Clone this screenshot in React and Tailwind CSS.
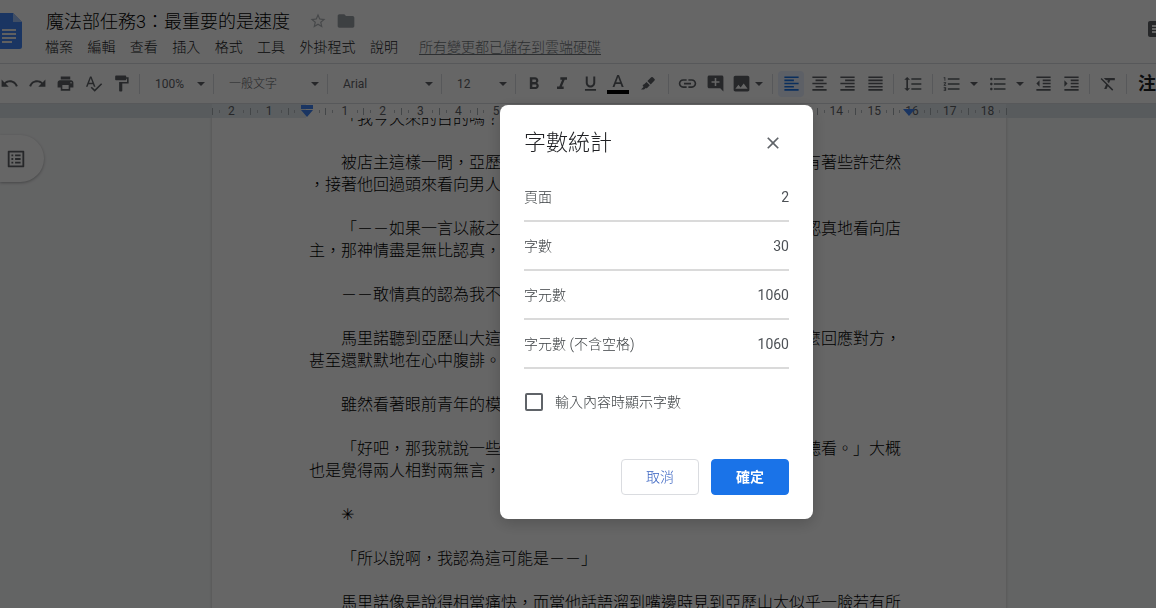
import React, { useState } from 'react';
import {
  MdAddComment,
  MdClose,
  MdComment,
  MdFolder,
  MdFormatAlignCenter,
  MdFormatAlignJustify,
  MdFormatAlignLeft,
  MdFormatAlignRight,
  MdFormatBold,
  MdFormatClear,
  MdFormatIndentDecrease,
  MdFormatIndentIncrease,
  MdFormatItalic,
  MdFormatLineSpacing,
  MdFormatListBulleted,
  MdFormatListNumbered,
  MdFormatPaint,
  MdFormatUnderlined,
  MdImage,
  MdLink,
  MdListAlt,
  MdPrint,
  MdRedo,
  MdSpellcheck,
  MdStarBorder,
  MdUndo,
} from 'react-icons/md';

const menus = ['檔案', '編輯', '查看', '插入', '格式', '工具', '外掛程式', '說明'];

// one array per paragraph, one string per line
const paragraphs = [
  ['　　「我今天來的目的嗎？」'],
  [
    '　　被店主這樣一問，亞歷山大先是愣了一下，那雙湛藍的眼眸之中帶有著些許茫然',
    '，接著他回過頭來看向男人。',
  ],
  [
    '　　「－－如果一言以蔽之，就是想請您幫個忙。」亞歷山大說著，很認真地看向店',
    '主，那神情盡是無比認真，不像玩笑。',
  ],
  ['　　－－敢情真的認為我不會拒絕嗎？'],
  [
    '　　馬里諾聽到亞歷山大這麼一說，頓時之間竟然有些不知道究竟該怎麼回應對方，',
    '甚至還默默地在心中腹誹。',
  ],
  ['　　雖然看著眼前青年的模樣並不討厭。'],
  [
    '　　「好吧，那我就說一些關於這件事情的來龍去脈，您不妨先姑且聽聽看。」大概',
    '也是覺得兩人相對兩無言，他開口。',
  ],
  ['　　✳\uFE0E'],
  ['　　「所以說啊，我認為這可能是－－」'],
  ['　　馬里諾像是說得相當痛快，而當他話語溜到嘴邊時見到亞歷山大似乎一臉若有所'],
];

const stats = [
  { label: '頁面', value: 2 },
  { label: '字數', value: 30 },
  { label: '字元數', value: 1060 },
  { label: '字元數 (不含空格)', value: 1060 },
];

const Caret = () => (
  <svg viewBox="0 0 8 4" className="w-2 h-1 shrink-0" fill="currentColor" aria-hidden="true">
    <path d="M0 0h8L4 4z" />
  </svg>
);

const Divider = () => <div className="w-px h-5 mx-1 bg-[#dadce0] shrink-0" />;

const ToolButton = ({ label, active, children }) => (
  <button
    type="button"
    aria-label={label}
    className="flex items-center justify-center w-7 h-7 shrink-0"
  >
    <span
      className={
        active
          ? 'flex items-center justify-center size-[26px] rounded-sm bg-[#e8f0fe] text-[#1a73e8]'
          : 'flex items-center justify-center size-[26px]'
      }
    >
      {children}
    </span>
  </button>
);

const ToolSelect = ({ label, value, className }) => (
  <div className={`grid items-center shrink-0 ${className}`}>
    <select
      aria-label={label}
      defaultValue={value}
      className="w-full h-7 pl-[11px] pr-4 appearance-none bg-transparent [grid-area:1/1]"
    >
      <option>{value}</option>
    </select>
    <div className="mr-1 pointer-events-none justify-self-end [grid-area:1/1]">
      <Caret />
    </div>
  </div>
);

const DocsLogo = () => (
  <svg viewBox="4 0 22 36" className="w-[22px] h-9 mt-[5px] shrink-0" aria-hidden="true">
    <path d="M2.500 0H17l9 9v24.500a2.500 2.500 0 0 1-2.500 2.500h-21A2.500 2.500 0 0 1 0 33.500v-31A2.500 2.500 0 0 1 2.500 0z" fill="#4285f4" />
    <path d="M17 0l9 9h-9z" fill="#a1c2fa" />
    <path d="M6 16h14v2H6zm0 4h14v2H6zm0 4h14v2H6zm0 4h10v2H6z" fill="#f1f1f1" />
  </svg>
);

const Header = () => (
  <header className="flex pt-2 pb-[3px] border-b border-[#dadce0] bg-white">
    <DocsLogo />
    <div className="flex-1 min-w-0 ml-[23px]">
      <div className="flex items-center h-[26px]">
        <input
          aria-label="文件名稱"
          defaultValue="魔法部任務3：最重要的是速度"
          className="w-[256px] h-[26px] px-px text-[18px] text-black bg-transparent"
        />
        <button type="button" aria-label="加上星號" className="ml-2 text-[#b0b4b8]">
          <MdStarBorder size={18} />
        </button>
        <button type="button" aria-label="移動" className="ml-[9px] text-[#9aa0a6]">
          <MdFolder size={20} />
        </button>
      </div>
      <div className="flex items-center h-[26px] text-sm text-[#202124] whitespace-nowrap">
        <nav className="flex justify-between w-[353px]">
          {menus.map((menu) => (
            <button key={menu} type="button">{menu}</button>
          ))}
        </nav>
        <a href="#history" className="ml-[21px] text-[#70757a] underline underline-offset-2">
          所有變更都已儲存到雲端硬碟
        </a>
      </div>
    </div>
    <button type="button" aria-label="註解" className="flex w-2 h-6 mt-[11px] overflow-hidden text-[#5f6368]">
      <MdComment size={24} className="-ml-0.5 shrink-0" />
    </button>
  </header>
);

const Toolbar = () => (
  <div className="flex items-center h-10 overflow-hidden border-b border-[#dadce0] bg-white text-[#5f6368]">
    <div className="flex -ml-[5px] shrink-0">
      <ToolButton label="復原"><MdUndo size={19} /></ToolButton>
      <ToolButton label="取消復原"><MdRedo size={19} /></ToolButton>
      <ToolButton label="列印"><MdPrint size={19} /></ToolButton>
      <ToolButton label="拼字檢查"><MdSpellcheck size={19} /></ToolButton>
      <ToolButton label="複製格式"><MdFormatPaint size={19} /></ToolButton>
    </div>
    <Divider />
    <ToolSelect label="縮放" value="100%" className="w-[65px] text-xs font-normal" />
    <Divider />
    <ToolSelect label="樣式" value="一般文字" className="w-[105px] text-xs" />
    <Divider />
    <ToolSelect label="字型" value="Arial" className="w-[105px] text-xs font-normal" />
    <Divider />
    <ToolSelect label="字型大小" value="12" className="w-[65px] text-xs font-normal" />
    <Divider />
    <ToolButton label="粗體"><MdFormatBold size={20} /></ToolButton>
    <ToolButton label="斜體"><MdFormatItalic size={20} /></ToolButton>
    <ToolButton label="底線"><MdFormatUnderlined size={19} /></ToolButton>
    <ToolButton label="文字顏色">
      <svg viewBox="0 0 22 20" className="w-[22px] h-5" fill="currentColor" aria-hidden="true">
        <path d="M10.200 1h1.800l4.700 12h-2l-1.100-3H8.600l-1.100 3h-2zM9.200 8.300h3.800l-1.900-5.200z" />
        <path d="M0 16h22v4H0z" fill="#000" />
      </svg>
    </ToolButton>
    <button type="button" aria-label="醒目顯示顏色" className="flex items-center justify-center w-8 h-7 shrink-0">
      <svg viewBox="0 0 16 16" className="size-4" fill="currentColor" aria-hidden="true">
        <path d="M11.200 1.300a1.100 1.100 0 0 1 1.600 0l1.700 1.700a1.100 1.100 0 0 1 0 1.600L10.700 8.400 7.400 5.100z" />
        <path d="M6.500 6l3.300 3.300-2.600 2.600a1.100 1.100 0 0 1-1.500 0l-.5.500L4 13.600H1l2.700-2.800a1.100 1.100 0 0 1 .2-2.200z" />
      </svg>
    </button>
    <Divider />
    <ToolButton label="插入連結"><MdLink size={21} /></ToolButton>
    <ToolButton label="新增註解"><MdAddComment size={19} /></ToolButton>
    <button type="button" aria-label="插入圖片" className="flex items-center w-[39px] h-7 pl-[3px] gap-1 shrink-0">
      <MdImage size={21} className="-mx-px" />
      <Caret />
    </button>
    <Divider />
    <ToolButton label="靠左對齊" active><MdFormatAlignLeft size={19} /></ToolButton>
    <ToolButton label="置中對齊"><MdFormatAlignCenter size={19} /></ToolButton>
    <ToolButton label="靠右對齊"><MdFormatAlignRight size={19} /></ToolButton>
    <ToolButton label="左右對齊"><MdFormatAlignJustify size={19} /></ToolButton>
    <Divider />
    <button type="button" aria-label="行距" className="flex items-center justify-center w-[30px] h-7 shrink-0">
      <MdFormatLineSpacing size={20} />
    </button>
    <Divider />
    <button type="button" aria-label="編號清單" className="flex items-center w-[46px] h-7 pl-[5px] gap-2 shrink-0">
      <MdFormatListNumbered size={20} />
      <Caret />
    </button>
    <button type="button" aria-label="項目符號清單" className="flex items-center w-[46px] h-7 pl-[5px] gap-2 shrink-0">
      <MdFormatListBulleted size={20} />
      <Caret />
    </button>
    <ToolButton label="減少縮排"><MdFormatIndentDecrease size={19} /></ToolButton>
    <ToolButton label="增加縮排"><MdFormatIndentIncrease size={19} /></ToolButton>
    <Divider />
    <ToolButton label="清除格式"><MdFormatClear size={19} /></ToolButton>
    <Divider />
    <button type="button" aria-label="輸入工具" className="pl-[7px] text-[18px] font-bold text-[#202124] shrink-0">注</button>
  </div>
);

// Background of a ruler cell: margins are tinted, the writing area is white.
const cellColor = (cm) => {
  if (cm === 0) return 'bg-[linear-gradient(to_right,#e4ebf0_50%,#fff_50%)]';
  if (cm === 16) return 'bg-[linear-gradient(to_right,#fff_45%,#e4ebf0_45%)]';
  return cm < 0 || cm > 16 ? 'bg-[#e4ebf0]' : 'bg-white';
};

const Ruler = () => (
  <div className="flex h-[14px] bg-[#dbe3e8] text-xs font-normal leading-[14px] text-[#5f6368]">
    <div className="w-[212px] shrink-0" />
    <div className="grid grid-cols-[repeat(21,minmax(0,1fr))] w-[794px] shrink-0">
      {Array.from({ length: 21 }, (_, i) => i - 2).map((cm) => (
        <div
          key={cm}
          className={`relative flex items-center justify-between h-[14px] ${cellColor(cm)}`}
        >
          <span className="w-px h-[7px] bg-[#a9aeb3]" />
          <span className="w-px h-[3px] bg-[#b9bec3]" />
          {cm === 0 ? (
            <svg viewBox="0 0 12 12" className="w-3 h-3" fill="#4285f4" aria-hidden="true">
              <path d="M0 0h12v4H0zM0 5h12L6 12z" />
            </svg>
          ) : (
            <span className="flex justify-center w-3">{Math.abs(cm)}</span>
          )}
          <span className="w-px h-[3px] bg-[#b9bec3]" />
          <span />
          {cm === 16 && (
            <svg viewBox="0 0 12 7" className="absolute bottom-0.5 left-2.5 w-3 h-[7px]" fill="#4285f4" aria-hidden="true">
              <path d="M0 0h12L6 7z" />
            </svg>
          )}
        </div>
      ))}
    </div>
    <div className="w-px h-[7px] mt-1 bg-[#a9aeb3]" />
  </div>
);

const DocumentArea = () => (
  <main className="flex flex-1 min-h-0 overflow-hidden bg-[#f8f9fa]">
    <aside className="w-[212px] pt-[17px] shrink-0">
      <button
        type="button"
        aria-label="顯示文件大綱"
        className="flex items-center w-11 h-[47px] pl-[5px] rounded-r-full bg-white shadow-[0_1px_3px_rgba(60,64,67,0.4)] text-[#5f6368]"
      >
        <MdListAlt size={22} />
      </button>
    </aside>
    <article className="w-[794px] shrink-0 px-[97px] bg-white shadow-[0_0_2px_1px_rgba(60,64,67,0.15)] text-black">
      <div className="flex flex-col gap-[22px] -mt-[10px]">
        {paragraphs.map((lines, i) => (
          <p key={i} className="leading-[22px] whitespace-nowrap">
            {lines.map((line) => (
              <span key={line} className="block h-[22px]">{line}</span>
            ))}
          </p>
        ))}
      </div>
    </article>
  </main>
);

const WordCountDialog = ({ onClose }) => {
  const [showCount, setShowCount] = useState(false);

  return (
    <div className="fixed inset-0 flex items-center justify-center pt-4 pl-[157px] bg-black/60">
      <div
        role="dialog"
        aria-modal="true"
        aria-labelledby="word-count-title"
        className="w-[313px] p-6 bg-white rounded-lg shadow-[0_4px_16px_rgba(0,0,0,0.2)] text-sm text-[#3c4043]"
      >
        <div className="flex items-center justify-between mb-4">
          <h2 id="word-count-title" className="text-[22px] leading-7 text-[#202124]">字數統計</h2>
          <button type="button" aria-label="關閉" onClick={onClose} className="mr-1.5 text-[#5f6368]">
            <MdClose size={20} />
          </button>
        </div>
        <dl>
          {stats.map(({ label, value }) => (
            <div key={label} className="flex items-center justify-between h-[49px] border-b-2 border-[#dadada]">
              <dt>{label}</dt>
              <dd className="font-normal text-[#4d5156]">{value}</dd>
            </div>
          ))}
        </dl>
        <div className="flex items-center h-[18px] mt-6 gap-3">
          <input
            id="show-count"
            type="checkbox"
            checked={showCount}
            onChange={(e) => setShowCount(e.target.checked)}
            className="size-[18px] ml-px appearance-none border-2 border-[#5f6368] rounded-xs checked:bg-[#1a73e8]"
          />
          <label htmlFor="show-count">輸入內容時顯示字數</label>
        </div>
        <div className="flex justify-end gap-3 mt-12">
          <button
            type="button"
            onClick={onClose}
            className="h-9 px-6 border border-[#dadce0] rounded text-[#3560c0]"
          >
            取消
          </button>
          <button
            type="button"
            onClick={onClose}
            className="h-9 px-6 font-bold text-white border border-[#1a73e8] rounded bg-[#1a73e8]"
          >
            確定
          </button>
        </div>
      </div>
    </div>
  );
};

const App = () => {
  const [open, setOpen] = useState(true);

  return (
    <div className="flex flex-col h-screen overflow-hidden bg-white font-light [text-spacing-trim:space-all] font-[Roboto,'Noto_Sans_CJK_TC','DejaVu_Sans',sans-serif]">
      <Header />
      <Toolbar />
      <Ruler />
      <DocumentArea />
      {open && <WordCountDialog onClose={() => setOpen(false)} />}
    </div>
  );
};

export default App;
